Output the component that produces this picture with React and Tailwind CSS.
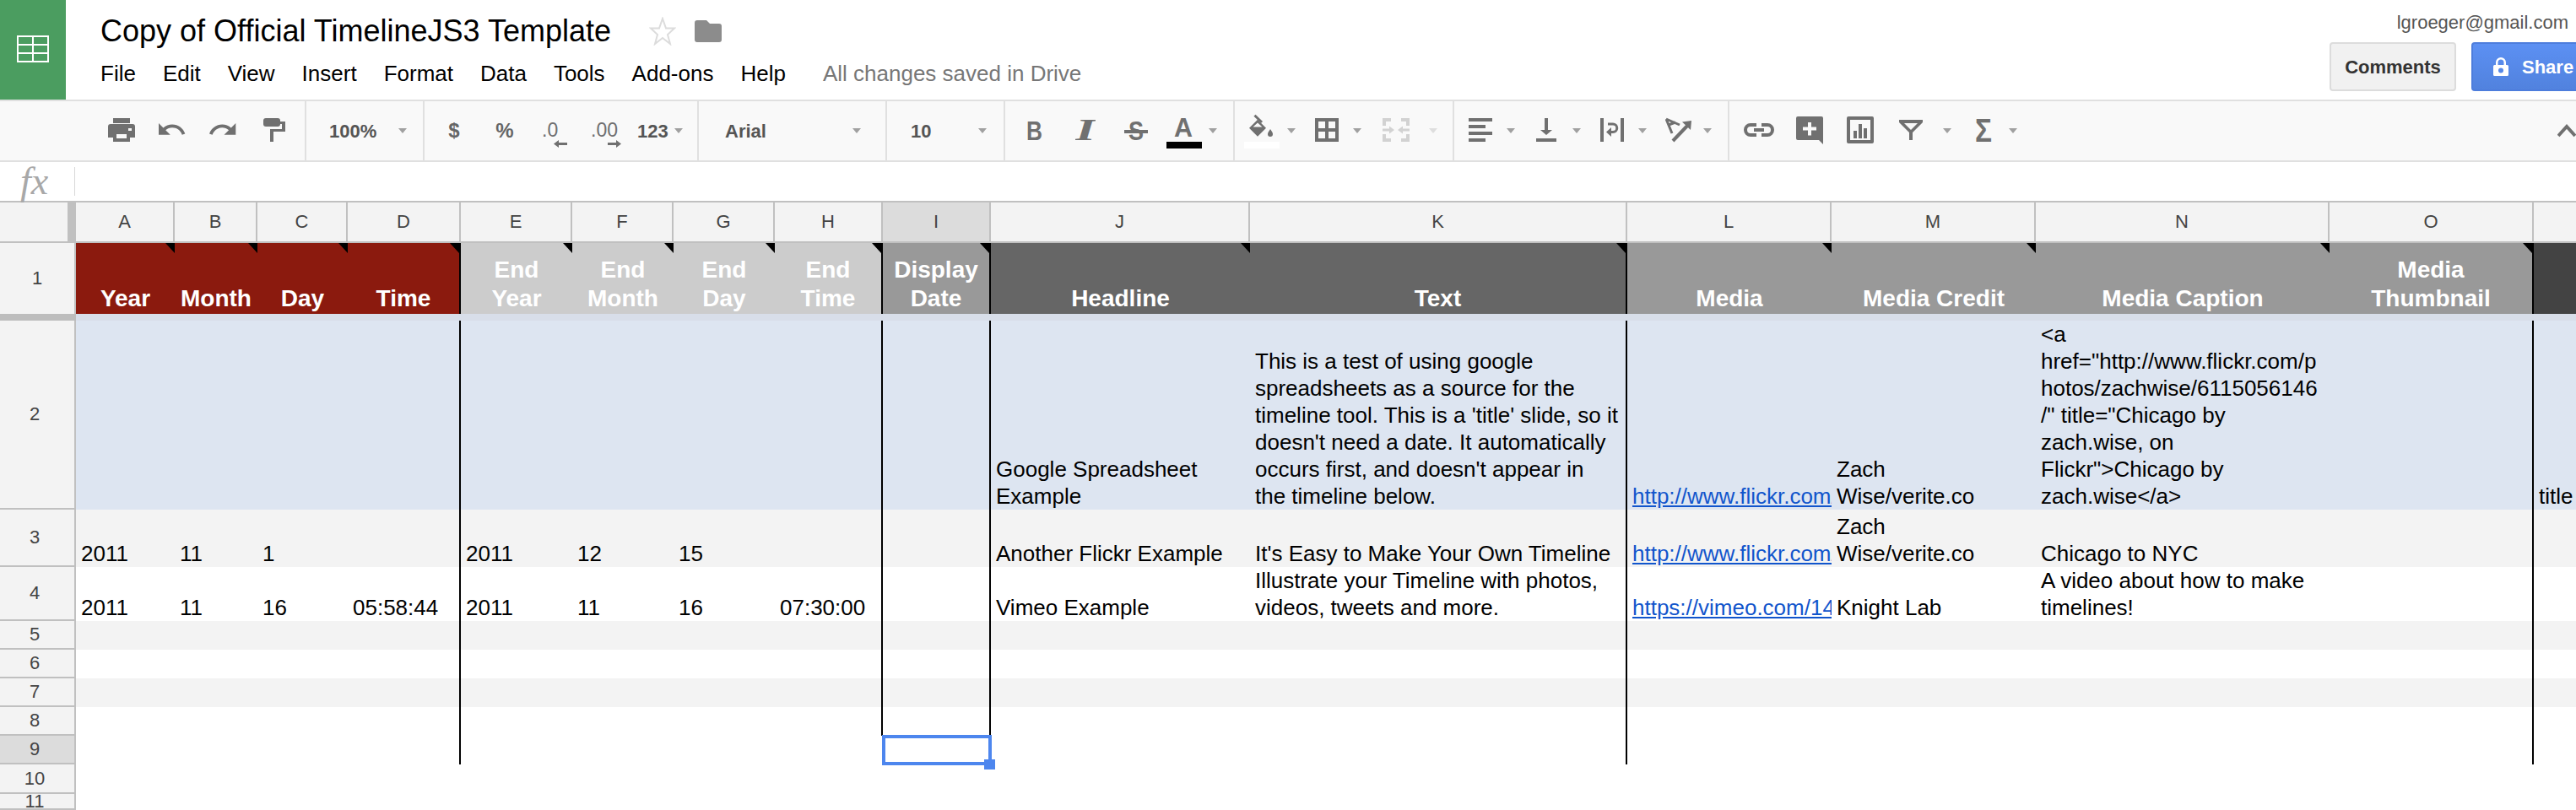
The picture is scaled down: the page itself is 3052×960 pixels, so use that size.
import React from "react";

const COLS = "ABCDEFGHIJKLMNOP".split("");
const DIVIDERS = ["D", "H", "I", "K", "O"];

const HEADERS = {
  A: ["Year", "bg-[#8b1a0e]"],
  B: ["Month", "bg-[#8b1a0e]"],
  C: ["Day", "bg-[#8b1a0e]"],
  D: ["Time", "bg-[#8b1a0e]"],
  E: ["End\nYear", "bg-[#cccccc]"],
  F: ["End\nMonth", "bg-[#cccccc]"],
  G: ["End\nDay", "bg-[#cccccc]"],
  H: ["End\nTime", "bg-[#cccccc]"],
  I: ["Display\nDate", "bg-[#999999]"],
  J: ["Headline", "bg-[#666666]"],
  K: ["Text", "bg-[#666666]"],
  L: ["Media", "bg-[#999999]"],
  M: ["Media Credit", "bg-[#999999]"],
  N: ["Media Caption", "bg-[#999999]"],
  O: ["Media\nThumbnail", "bg-[#999999]"],
  P: ["", "bg-[#434343]"],
};

// cell padding per column, the wrap points of the long text columns depend on it
const PADDING = {
  K: "pl-[6px] pr-[8px]",
  L: "pl-[6px]",
  M: "pl-[6px] pr-[20px]",
  N: "pl-[6px] pr-[8px]",
  P: "pl-[6px]",
};

const ROWS = [
  {
    n: 2,
    bg: "bg-[#dde5f1]",
    cells: {
      J: "Google Spreadsheet Example",
      K: "This is a test of using google spreadsheets as a source for the timeline tool. This is a 'title' slide, so it doesn't need a date. It automatically occurs first, and doesn't appear in the timeline below.",
      L: "http://www.flickr.com/photos/zachwise/6115056146/",
      M: "Zach Wise/verite.co",
      N: '<a href="http://www.flickr.com/photos/zachwise/6115056146/" title="Chicago by zach.wise, on Flickr">Chicago by zach.wise</a>',
      P: "title",
    },
  },
  {
    n: 3,
    bg: "bg-[#f3f3f3]",
    cells: {
      A: "2011",
      B: "11",
      C: "1",
      E: "2011",
      F: "12",
      G: "15",
      J: "Another Flickr Example",
      K: "It's Easy to Make Your Own Timeline",
      L: "http://www.flickr.com/photos/zachwise/6115056146/",
      M: "Zach Wise/verite.co",
      N: "Chicago to NYC",
    },
  },
  {
    n: 4,
    bg: "bg-white",
    cells: {
      A: "2011",
      B: "11",
      C: "16",
      D: "05:58:44",
      E: "2011",
      F: "11",
      G: "16",
      H: "07:30:00",
      J: "Vimeo Example",
      K: "Illustrate your Timeline with photos, videos, tweets and more.",
      L: "https://vimeo.com/143407878",
      M: "Knight Lab",
      N: "A video about how to make timelines!",
    },
  },
  { n: 5, bg: "bg-[#f3f3f3]", cells: {} },
  { n: 6, bg: "bg-white", cells: {} },
  { n: 7, bg: "bg-[#f3f3f3]", cells: {} },
  { n: 8, bg: "bg-white", cells: {} },
  { n: 9, bg: "bg-white", cells: {} },
  { n: 10, bg: "bg-white", cells: {} },
  { n: 11, bg: "bg-white", cells: {} },
];

function Icon({ w, className = "", fill = "#707070", children }) {
  return (
    <svg
      width={w}
      height={44}
      viewBox={`0 0 ${w} 44`}
      fill={fill}
      fillRule="evenodd"
      className={`shrink-0 ${className}`}
    >
      {children}
    </svg>
  );
}

function Caret({ className = "", fill = "#a0a0a0" }) {
  return (
    <svg width={10} height={6} viewBox="0 0 10 6" fill={fill} className={`shrink-0 ${className}`}>
      <path d="M0 0h10L5 6z" />
    </svg>
  );
}

function Sep({ className = "" }) {
  return <div className={`w-[2px] shrink-0 self-stretch bg-[#e0e0e0] ${className}`} />;
}

function Toolbar() {
  const sansBold = { fontFamily: "Liberation Sans", fontWeight: 700 };
  return (
    <div className="flex h-[74px] items-center border-y-2 border-[#e0e0e0] bg-[#f9f9f9] pl-[128px]">
      <Icon w={32}>
        <path d="M6 7h20v6H6z" />
        <path d="M3 14h26a3 3 0 0 1 3 3v13h-6v5H6v-5H0V17a3 3 0 0 1 3-3zM10 26v5h12v-5zM24 19v3h4v-3z" />
      </Icon>
      <Icon w={32} className="ml-[28px]">
        <path
          transform="translate(-3.06 2.36) scale(1.53 1.52)"
          d="M12.5 8c-2.65 0-5.05.99-6.9 2.6L2 7v9h9l-3.62-3.62c1.39-1.16 3.16-1.88 5.12-1.88 3.54 0 6.55 2.31 7.6 5.5l2.37-.78C21.08 11.03 17.15 8 12.5 8z"
        />
      </Icon>
      <Icon w={32} className="ml-[28px]">
        <path
          transform="translate(-2.36 2.36) scale(1.53 1.52)"
          d="M18.4 10.6C16.55 8.99 14.15 8 11.5 8c-4.65 0-8.58 3.03-9.96 7.22L3.9 16c1.05-3.19 4.05-5.5 7.6-5.5 1.95 0 3.73.72 5.12 1.88L13 16h9V7l-3.6 3.6z"
        />
      </Icon>
      <Icon w={26} className="ml-[32px]">
        <path d="M3 7h14a3 3 0 0 1 3 3v4a3 3 0 0 1-3 3H3a3 3 0 0 1-3-3v-4a3 3 0 0 1 3-3z" />
        <path d="M20 11h6v12H12v12H8V20h14v-6h-2z" />
      </Icon>
      <Sep className="ml-[23px]" />
      <span className="ml-[27px] w-[57px] shrink-0 whitespace-nowrap text-[22px] font-bold text-[#555]">100%</span>
      <Caret className="ml-[25px]" />
      <Sep className="ml-[19px]" />
      <span className="ml-[28px] w-[14px] shrink-0 text-center text-[24px] font-bold text-[#666]">$</span>
      <span className="ml-[42px] w-[22px] shrink-0 text-center text-[24px] font-bold text-[#666]">%</span>
      <Icon w={30} className="ml-[33px]">
        <text x="0" y="29" fontSize="23" fontFamily="Liberation Sans" fill="#707070">.0</text>
        <path d="M14 37.5l6-4.5v3h10v3H20v3z" />
      </Icon>
      <Icon w={36} className="ml-[28px]">
        <text x="0" y="29" fontSize="23" fontFamily="Liberation Sans" fill="#707070">.00</text>
        <path d="M36 37.5l-6-4.5v3H20v3h10v3z" />
      </Icon>
      <span className="ml-[19px] w-[37px] shrink-0 whitespace-nowrap text-[22px] font-bold text-[#555]">123</span>
      <Caret className="ml-[7px]" />
      <Sep className="ml-[17px]" />
      <span className="ml-[31px] w-[50px] shrink-0 whitespace-nowrap text-[22px] font-bold text-[#555]">Arial</span>
      <Caret className="ml-[101px]" />
      <Sep className="ml-[29px]" />
      <span className="ml-[28px] w-[26px] shrink-0 whitespace-nowrap text-[22px] font-bold text-[#555]">10</span>
      <Caret className="ml-[54px]" />
      <Sep className="ml-[20px]" />
      <Icon w={19} className="ml-[25px]">
        <text x="0" y="33" fontSize="32" style={sansBold} fill="#707070" textLength="19" lengthAdjust="spacingAndGlyphs">B</text>
      </Icon>
      <Icon w={24} className="ml-[39px]">
        <text x="0" y="33" fontSize="35" fontFamily="Liberation Serif" fontWeight="700" fontStyle="italic" fill="#707070" textLength="24" lengthAdjust="spacingAndGlyphs">I</text>
      </Icon>
      <Icon w={28} className="ml-[34px]">
        <text x="5" y="33" fontSize="32" style={sansBold} fill="#707070" textLength="18" lengthAdjust="spacingAndGlyphs">S</text>
        <path d="M0 21h28v4H0z" />
      </Icon>
      <Icon w={42} className="ml-[22px]">
        <text x="9" y="29" fontSize="32" style={sansBold} fill="#707070" textLength="22" lengthAdjust="spacingAndGlyphs">A</text>
        <path d="M0 35h42v8H0z" fill="#000" />
      </Icon>
      <Caret className="ml-[8px]" />
      <Sep className="ml-[19px]" />
      <Icon w={42} className="ml-[11px]">
        <path d="M16 8.7L26 18.7 16 28.7 6 18.7zM16 12.5L10.5 17.5H21.5z" />
        <path d="M12.5 3.7L21 12" stroke="#707070" strokeWidth="3" fill="none" />
        <path d="M31 20c2 3 3 4.5 3 6a3 3 0 0 1-6 0c0-1.5 1-3 3-6z" />
        <path d="M0 35h42v8H0z" fill="#fff" />
      </Icon>
      <Caret className="ml-[9px]" />
      <Icon w={28} className="ml-[23px]">
        <path d="M0 7h28v28H0zM4 11v8h8v-8zM16 11v8h8v-8zM4 23v8h8v-8zM16 23v8h8v-8z" />
      </Icon>
      <Caret className="ml-[17px]" />
      <Icon w={32} className="ml-[25px]" fill="#d2d2d2">
        <path d="M0 7h10v4H4v5H0zM22 7h10v9h-4v-5h-6zM0 26h4v5h6v4H0zM28 26h4v9H22v-4h6z" />
        <path d="M0 19.5h8v-3l6 4.5-6 4.5v-3H0zM32 19.5h-8v-3l-6 4.5 6 4.5v-3h8z" />
      </Icon>
      <Caret className="ml-[23px]" fill="#dedede" />
      <Sep className="ml-[18px]" />
      <Icon w={28} className="ml-[17px]">
        <path d="M0 7h28v4H0zM0 15h20v4H0zM0 23h28v4H0zM0 31h20v4H0z" />
      </Icon>
      <Caret className="ml-[17px]" />
      <Icon w={24} className="ml-[25px]">
        <path d="M0 31h24v4H0zM10 7h4v14h5l-7 6-7-6h5z" />
      </Icon>
      <Caret className="ml-[19px]" />
      <Icon w={28} className="ml-[23px]">
        <path d="M0 7h4v28H0zM24 7h4v28h-4z" />
        <path d="M9 14h6a4.7 4.7 0 0 1 0 9.5h-4" stroke="#707070" strokeWidth="3" fill="none" />
        <path d="M13 18l-6 5.500 6 5.500z" />
      </Icon>
      <Caret className="ml-[17px]" />
      <Icon w={31} className="ml-[22px]">
        <path d="M1 8L17 15M1 8L8 25M4 15L12 12" stroke="#707070" strokeWidth="3" fill="none" />
        <path d="M9 34L28 14" stroke="#707070" strokeWidth="4" fill="none" />
        <path d="M20 11.500L31 10 30 21z" />
      </Icon>
      <Caret className="ml-[14px]" />
      <Sep className="ml-[19px]" />
      <Icon w={36} className="ml-[17px]">
        <path d="M15 15H8a6 6 0 0 0 0 12h7M21 15h7a6 6 0 0 1 0 12h-7M12 21h12" stroke="#707070" strokeWidth="4" fill="none" />
      </Icon>
      <Icon w={32} className="ml-[26px]">
        <path d="M2 5h28a2 2 0 0 1 2 2v31l-5-5H2a2 2 0 0 1-2-2V7a2 2 0 0 1 2-2zM14 12v5.500H8v4h6v6h4v-6h6v-4h-6V12z" />
      </Icon>
      <Icon w={32} className="ml-[28px]">
        <path d="M2 5h28a2 2 0 0 1 2 2v28a2 2 0 0 1-2 2H2a2 2 0 0 1-2-2V7a2 2 0 0 1 2-2zM4 9v24h24V9z" />
        <path d="M8 22h4v9H8zM14 14h4v17h-4zM20 19h4v12h-4z" />
      </Icon>
      <Icon w={28} className="ml-[30px]">
        <path d="M0 9h28v3L16 24v9h-4V24L0 12zM6 13l8 8 8-8z" />
      </Icon>
      <Caret className="ml-[24px]" />
      <Icon w={20} className="ml-[28px]">
        <text x="0" y="35" fontSize="38" style={sansBold} fill="#707070" textLength="20" lengthAdjust="spacingAndGlyphs">Σ</text>
      </Icon>
      <Caret className="ml-[20px]" />
      <Icon w={22} className="ml-auto">
        <path d="M1 28L11 17 21 28" stroke="#707070" strokeWidth="4" fill="none" />
      </Icon>
    </div>
  );
}

function Header() {
  return (
    <div className="flex h-[118px]">
      <div className="flex w-[78px] shrink-0 items-center justify-center bg-[#4b9d60]">
        <svg width="38" height="32" viewBox="0 0 38 32" fill="none" stroke="#fff" strokeWidth="2" className="mt-[-3px]">
          <path d="M1 1h36v30H1zM1 11h36M1 21h36M19 1v30" />
        </svg>
      </div>
      <div className="pl-[41px]">
        <div className="box-content flex h-[42px] items-center pt-[16px]">
          <span className="text-[36px] leading-[42px] text-black">Copy of Official TimelineJS3 Template</span>
          <svg width="32" height="34" viewBox="0 0 32 34" fill="none" stroke="#dcdcdc" strokeWidth="2" className="ml-[45px]">
            <path d="M16 2l4 11.500h10l-8 7.500 3 11-9-7-9 7 3-11-8-7.500h10z" />
          </svg>
          <svg width="32" height="26" viewBox="0 0 32 26" fill="#8c8c8c" className="ml-[22px]">
            <path d="M3 0h11l4 4h11a3 3 0 0 1 3 3v16a3 3 0 0 1-3 3H3a3 3 0 0 1-3-3V3a3 3 0 0 1 3-3z" />
          </svg>
        </div>
        <div className="mt-[14px] flex gap-8 text-[26px] leading-[30px] text-black">
          <span>File</span>
          <span>Edit</span>
          <span>View</span>
          <span>Insert</span>
          <span>Format</span>
          <span>Data</span>
          <span>Tools</span>
          <span>Add-ons</span>
          <span>Help</span>
          <span className="ml-[12px] text-[#777]">All changes saved in Drive</span>
        </div>
      </div>
      <div className="ml-auto flex flex-col items-end">
        <div className="mt-[14px] h-[26px] pr-[9px] text-[22px] leading-[26px] text-[#555]">lgroeger@gmail.com</div>
        <div className="mt-[10px] flex gap-[18px]">
          <button className="h-[58px] w-[150px] rounded-[4px] border-2 border-[#dcdcdc] bg-[#f1f1f1] text-[22px] font-bold text-[#333]">
            Comments
          </button>
          <button className="flex h-[58px] w-[124px] items-center rounded-l-[4px] border-2 border-r-0 border-[#4d7ddc] bg-gradient-to-b from-[#5c90f3] to-[#5182de] pl-[24px] text-[22px] font-bold text-white">
            <svg width="18" height="22" viewBox="0 0 18 22" className="shrink-0" fill="#fff" fillRule="evenodd">
              <path d="M3 9V6a6 6 0 0 1 12 0v3h1.500A1.500 1.500 0 0 1 18 10.500v10a1.500 1.500 0 0 1-1.500 1.500h-15A1.500 1.500 0 0 1 0 20.500v-10A1.500 1.500 0 0 1 1.500 9zM5.500 9h7V6a3.500 3.500 0 0 0-7 0zM9 12.500a3 3 0 1 0 0 6 3 3 0 0 0 0-6z" />
            </svg>
            <span className="ml-[16px]">Share</span>
          </button>
        </div>
      </div>
    </div>
  );
}

function FormulaBar() {
  return (
    <div className="flex h-[48px] items-center border-b-2 border-[#c0c0c0] pl-[24px]">
      <span className="w-[64px] font-['Liberation_Serif',serif] text-[46px] italic leading-[44px] text-[#a8a8a8]">fx</span>
      <div className="h-[34px] w-[1px] bg-[#d8d8d8]" />
    </div>
  );
}

function Triangle() {
  return <div className="absolute top-0 right-0 h-[12px] w-[11px] bg-black [clip-path:polygon(0_0,100%_0,100%_100%)]" />;
}

function Sheet() {
  return (
    <div className="grid grid-cols-[90px_117px_98px_107px_134px_132px_120px_120px_128px_128px_307px_447px_242px_242px_348px_242px_50px] grid-rows-[48px_84px_8px_224px_68px_64px_34px_34px_34px_34px_34px_35px_19px] text-[26px] leading-[32px] text-black">
      <div className="border-r-[10px] border-b-2 border-[#c0c0c0] bg-[#f3f3f3]" />
      {COLS.map((c) => (
        <div
          key={c}
          className={`flex items-center justify-center border-b-2 border-[#c0c0c0] text-[22px] text-[#444] ${
            c === "P" ? "" : "border-r-2"
          } ${c === "I" ? "bg-[#dcdcdc]" : "bg-[#f3f3f3]"}`}
        >
          {c === "P" ? "" : c}
        </div>
      ))}

      <div className="flex items-center justify-center border-r-2 border-[#c0c0c0] bg-[#f3f3f3] text-[22px] text-[#444]">1</div>
      {COLS.map((c) => (
        <div
          key={c}
          className={`relative flex items-end justify-center pb-[1px] text-center text-[28px] font-bold leading-[34px] text-white ${HEADERS[c][1]} ${
            DIVIDERS.includes(c) ? "border-r-2 border-black" : ""
          }`}
        >
          <span className="whitespace-pre-line">{HEADERS[c][0]}</span>
          {c !== "P" && <Triangle />}
        </div>
      ))}

      <div className="bg-[#bdbdbd]" />
      <div className="col-span-16 bg-[#d8dee9]" />

      {ROWS.map((row) => (
        <React.Fragment key={row.n}>
          <div
            className={`flex items-center justify-center border-r-2 border-b-2 border-[#c0c0c0] pr-[6px] text-[22px] text-[#444] ${
              row.n === 9 ? "bg-[#dcdcdc]" : "bg-[#f3f3f3]"
            }`}
          >
            {row.n}
          </div>
          {COLS.map((c) => {
            const selected = row.n === 9 && c === "I";
            const line = row.n <= 9 && DIVIDERS.includes(c) && !(row.n === 9 && (c === "H" || c === "I"));
            const text = row.cells[c];
            return (
              <div
                key={c}
                className={`relative flex min-w-0 items-end ${PADDING[c] || "px-[6px]"} ${row.bg} ${
                  line ? "border-r-2 border-black" : ""
                } ${selected ? "z-10" : ""}`}
              >
                {c === "L" && text ? (
                  <span className="overflow-hidden whitespace-nowrap text-[#1155cc] underline">{text}</span>
                ) : (
                  <span className={`min-w-0 ${c === "P" ? "whitespace-nowrap" : "break-words"}`}>{text}</span>
                )}
                {selected && (
                  <>
                    <div className="absolute inset-[-1px] border-4 border-[#4d86ee]" />
                    <div className="absolute right-[-5px] bottom-[-6px] h-[12px] w-[13px] bg-[#4d86ee]" />
                  </>
                )}
              </div>
            );
          })}
        </React.Fragment>
      ))}
    </div>
  );
}

export default function App() {
  return (
    <div className="h-[960px] w-[3052px] overflow-hidden bg-white font-['Liberation_Sans',Arial,sans-serif]">
      <Header />
      <Toolbar />
      <FormulaBar />
      <Sheet />
    </div>
  );
}
